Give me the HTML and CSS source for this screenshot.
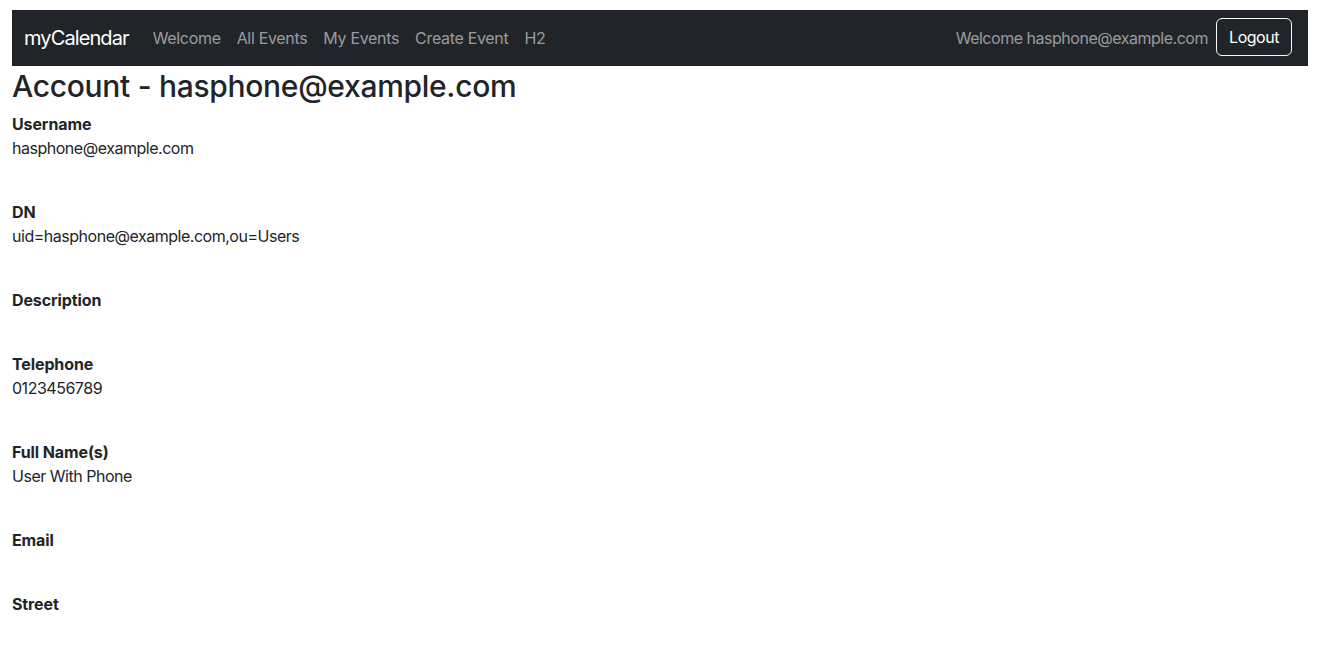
FILE: index.html
```html
<!DOCTYPE html>
<html lang="en">
<head>
<meta charset="utf-8">
<title>Account</title>
<link rel="stylesheet" href="styles.css">
</head>
<body>
<div class="page">
  <nav class="navbar">
    <a class="brand" href="#">myCalendar</a>
    <ul class="nav">
      <li><a class="nav-link" href="#">Welcome</a></li>
      <li><a class="nav-link" href="#">All Events</a></li>
      <li><a class="nav-link" href="#">My Events</a></li>
      <li><a class="nav-link" href="#">Create Event</a></li>
      <li><a class="nav-link" href="#">H2</a></li>
    </ul>
    <div class="nav-right">
      <span class="welcome">Welcome hasphone@example.com</span>
      <button class="btn-logout" type="button">Logout</button>
    </div>
  </nav>
  <h1 class="title">Account - hasphone@example.com</h1>
  <div class="fields">
    <div class="field"><div class="label">Username</div><div class="value">hasphone@example.com</div></div>
    <div class="field"><div class="label">DN</div><div class="value">uid=hasphone@example.com,ou=Users</div></div>
    <div class="field"><div class="label">Description</div></div>
    <div class="field"><div class="label">Telephone</div><div class="value">0123456789</div></div>
    <div class="field"><div class="label">Full Name(s)</div><div class="value">User With Phone</div></div>
    <div class="field"><div class="label">Email</div></div>
    <div class="field"><div class="label">Street</div></div>
  </div>
</div>
</body>
</html>
```

FILE: styles.css
```css
* { box-sizing: border-box; }
html, body { margin: 0; padding: 0; background: #fff; }
body {
  font-family: Inter, "Liberation Sans", sans-serif;
  font-size: 16px;
  line-height: 24px;
  letter-spacing: -0.03em;
  color: #212529;
}
.page {
  width: 1296px;
  margin: 10px 0 0 12px;
}
.navbar {
  display: flex;
  align-items: center;
  height: 56px;
  padding: 8px 16px 8px 12px;
  background: #212529;
}
.brand {
  font-size: 20px;
  line-height: 30px;
  letter-spacing: -0.045em;
  color: #fff;
  text-decoration: none;
  margin-right: 16px;
}
.nav {
  display: flex;
  list-style: none;
  margin: 0;
  padding: 0;
}
.nav-link {
  display: block;
  padding: 8px;
  letter-spacing: -0.02em;
  color: rgba(255,255,255,0.55);
  text-decoration: none;
}
.nav-right {
  margin-left: auto;
  display: flex;
  align-items: center;
  gap: 8px;
}
.welcome {
  color: rgba(255,255,255,0.55);
}
.btn-logout {
  font: inherit;
  letter-spacing: inherit;
  color: #fff;
  background: transparent;
  border: 1px solid #f8f9fa;
  border-radius: 6px;
  height: 38px;
  width: 76px;
  padding: 0;
  margin-bottom: 2px;
}
.title {
  margin: 1px 0 7px;
  font-size: 30px;
  font-weight: 500;
  line-height: 38px;
  letter-spacing: -0.01em;
}
.fields {
  display: flex;
  flex-direction: column;
  gap: 40px;
}
.label {
  font-weight: 700;
  letter-spacing: -0.007em;
}
```
